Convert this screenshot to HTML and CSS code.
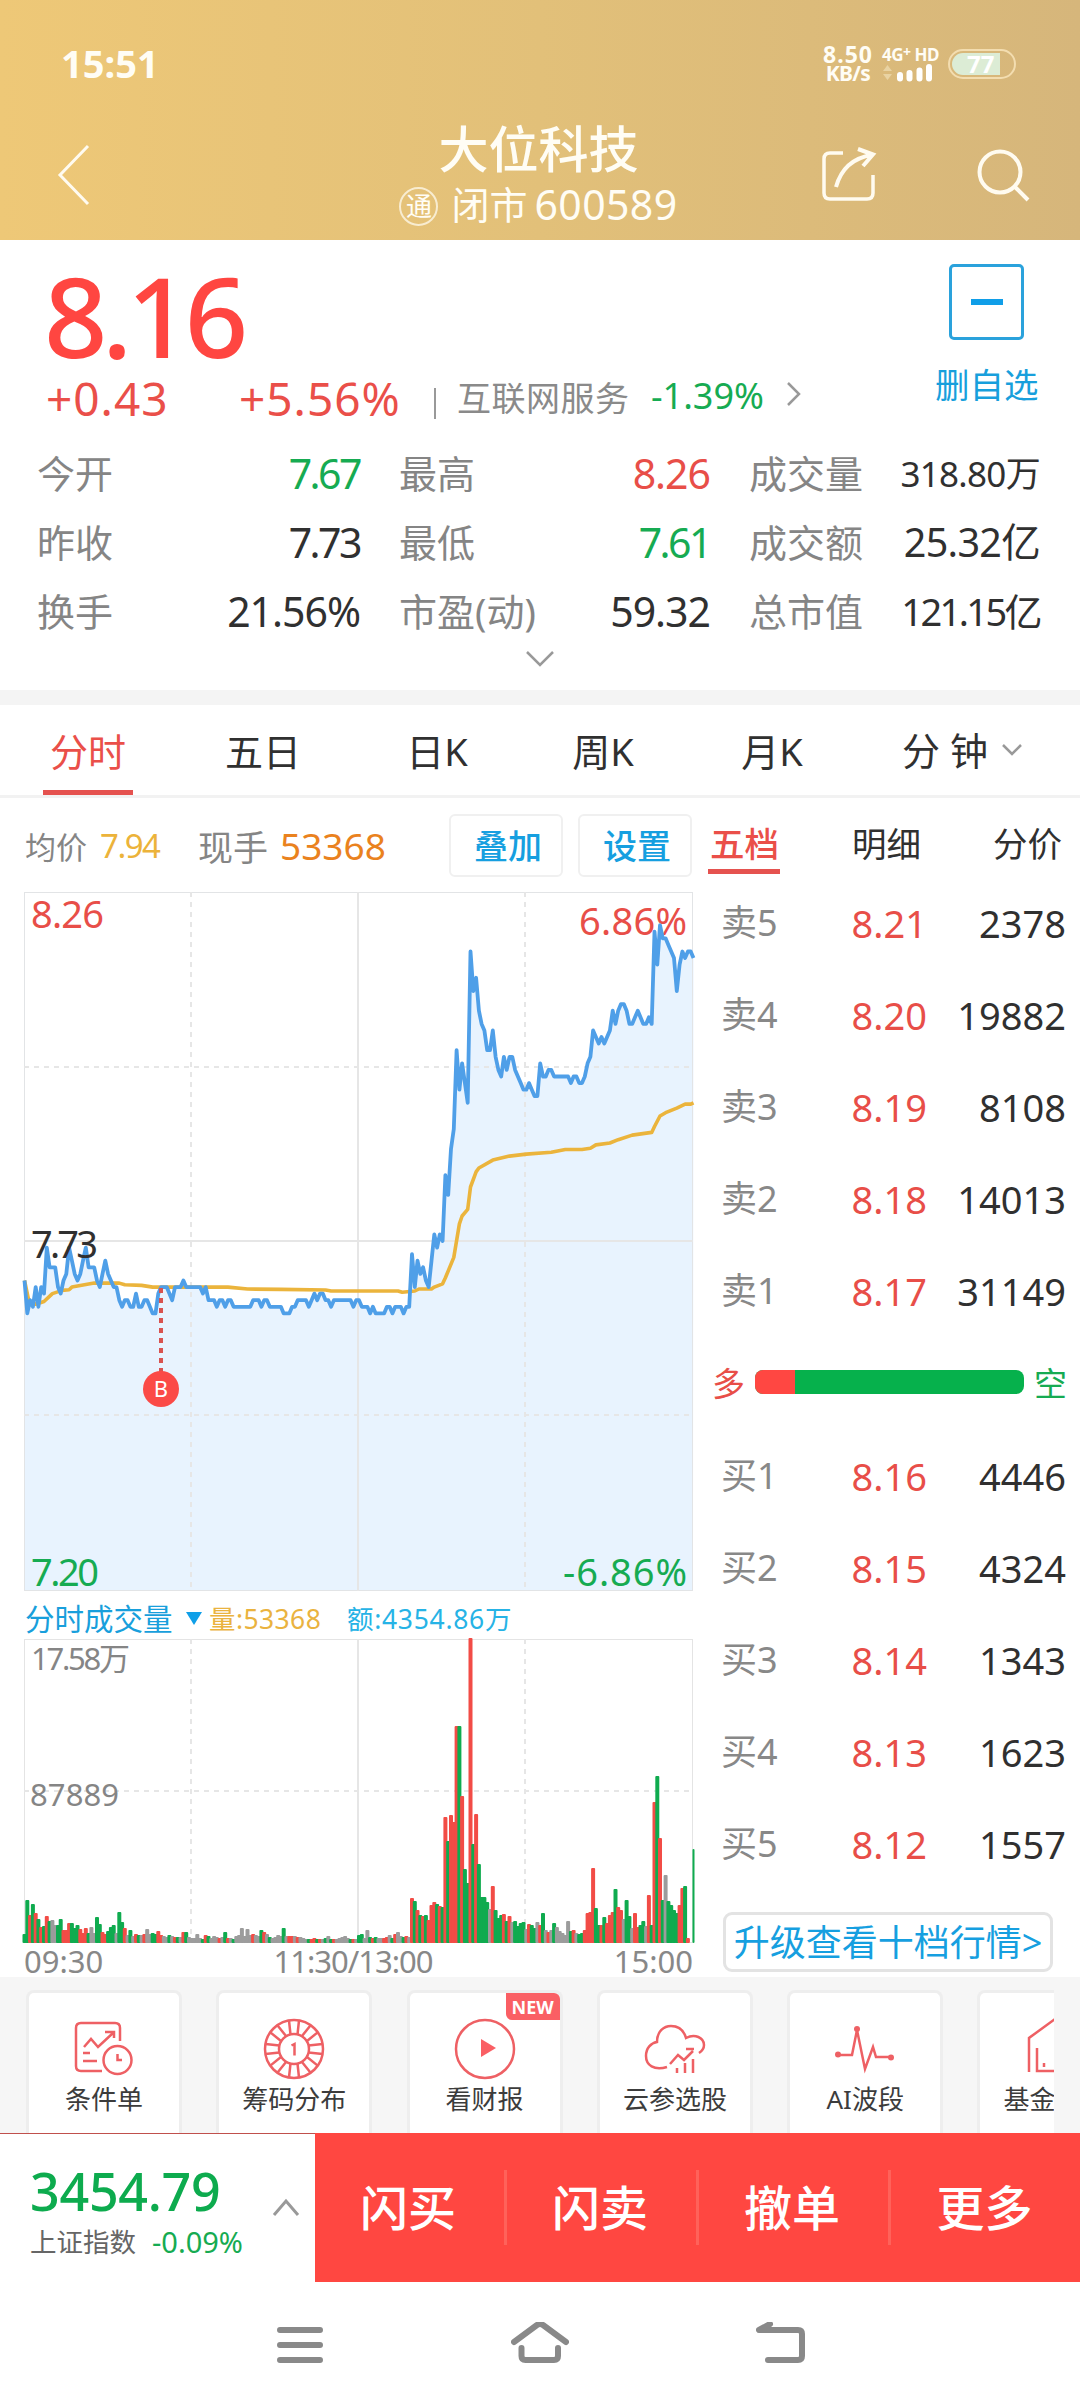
FILE: index.html
```html
<!DOCTYPE html>
<html lang="zh-CN">
<head>
    <meta charset="UTF-8">
    <meta name="viewport" content="width=device-width, initial-scale=1.0">
    <title>大位科技 600589</title>
    <link rel="stylesheet" href="styles.css">
</head>
<body>
    <header class="header">
        <div class="status-bar">
            <span class="clock">15:51</span>
            <div class="status-right">
                <div class="speed"><span>8.50</span><span class="unit">KB/s</span></div>
                <div class="network">
                    <div class="net-type">4G<sup>+</sup> HD</div>
                    <svg width="54" height="18" viewBox="0 0 54 18">
                        <path d="M1 7L5.500 1L10 7ZM1 10L5.500 16L10 10Z" fill="#e9d3a2"/>
                        <path d="M18 11V14.500M27.500 9V14.500M37.500 6.500V14.500M47 3V14.500" stroke="#fff" stroke-width="6" stroke-linecap="round"/>
                    </svg>
                </div>
                <div class="battery"><span>77</span></div>
            </div>
        </div>
        <div class="title-bar">
            <svg class="back" width="36" height="64" viewBox="0 0 36 64"><path d="M32 3L4 32L32 61" fill="none" stroke="#fffbf0" stroke-width="3"/></svg>
            <div class="title">
                <h1>大位科技</h1>
                <div class="subtitle"><span class="badge">通</span><span>闭市</span><span class="code">600589</span></div>
            </div>
            <div class="title-actions">
                <svg width="56" height="56" viewBox="0 0 56 56" fill="none" stroke="#fffbf0" stroke-width="3.500">
                    <path d="M22 6H9Q3 6 3 12V46Q3 52 9 52H46Q52 52 52 46V28"/>
                    <path d="M15 40C20 22 31 11 51 8M37 2L52 7.500L42 19" stroke-width="4"/>
                </svg>
                <svg width="54" height="56" viewBox="0 0 54 56" fill="none" stroke="#fffbf0" stroke-width="4">
                    <circle cx="23" cy="25" r="20.500"/>
                    <path d="M38 40L51 53"/>
                </svg>
            </div>
        </div>
    </header>

    <section class="quote">
        <div class="quote-top">
            <div>
                <div class="price">8.16</div>
                <div class="change">
                    <span class="diff">+0.43</span>
                    <span class="rate">+5.56%</span>
                    <i class="bar"></i>
                    <span class="sector">互联网服务</span>
                    <span class="sector-rate">-1.39%</span>
                    <svg width="18" height="26" viewBox="0 0 18 26"><path d="M3 2L14 13L3 24" fill="none" stroke="#999" stroke-width="2.500"/></svg>
                </div>
            </div>
            <div class="fav">
                <div class="fav-box"></div>
                <span>删自选</span>
            </div>
        </div>
        <div class="stats">
            <div><label>今开</label><b class="down narrow">7.67</b></div>
            <div><label>最高</label><b class="up">8.26</b></div>
            <div><label>成交量</label><b class="small">318.80万</b></div>
            <div><label>昨收</label><b class="narrow">7.73</b></div>
            <div><label>最低</label><b class="down narrow">7.61</b></div>
            <div><label>成交额</label><b class="mid">25.32亿</b></div>
            <div><label>换手</label><b>21.56%</b></div>
            <div><label>市盈(动)</label><b>59.32</b></div>
            <div><label>总市值</label><b class="tight">121.15亿</b></div>
        </div>
        <svg class="expand" width="30" height="18" viewBox="0 0 30 18"><path d="M2 2L15 15L28 2" fill="none" stroke="#999" stroke-width="2.500"/></svg>
    </section>

    <nav class="tabs">
        <span class="active">分时</span>
        <span>五日</span>
        <span>日K</span>
        <span>周K</span>
        <span>月K</span>
        <span class="minute">分 钟<svg width="22" height="14" viewBox="0 0 22 14"><path d="M2 2L11 11L20 2" fill="none" stroke="#999" stroke-width="2.500"/></svg></span>
    </nav>

    <main class="main">
        <div class="left">
            <div class="info">
                <span class="avg-label">均价</span><span class="avg">7.94</span>
                <span class="now-label">现手</span><span class="now">53368</span>
                <button class="btn-add">叠加</button>
                <button>设置</button>
            </div>
            <svg class="price-chart" id="price-chart" width="669" height="699" viewBox="0 0 669 699"></svg>
            <div class="vol-head">
                <span class="vol-title">分时成交量</span>
                <svg width="16" height="13" viewBox="0 0 16 13"><path d="M0 0H16L8 13Z" fill="#0f9fe8"/></svg>
                <span class="vol-num">量:53368</span>
                <span class="vol-amount">额:4354.86万</span>
            </div>
            <svg class="vol-chart" id="vol-chart" width="669" height="304" viewBox="0 0 669 304"></svg>
            <div class="times"><span>09:30</span><span class="noon">11:30/13:00</span><span>15:00</span></div>
        </div>
        <div class="right">
            <div class="book-tabs"><span class="active">五档</span><span>明细</span><span>分价</span></div>
            <div class="book" id="book"></div>
            <div class="upgrade">升级查看十档行情&gt;</div>
        </div>
    </main>

    <section class="shortcuts">
        <div class="shortcut-row">
            <div class="card">
                <svg width="62" height="62" viewBox="0 0 62 62" class="icon">
                    <path d="M29 53H8Q3 53 3 48V10Q3 5 8 5H42Q47 5 47 10V23"/>
                    <path d="M11 29L18 21L25 29L40 15M32 14H41V20M10 35H17M10 43H24"/>
                    <circle cx="44.500" cy="42" r="14"/>
                    <path d="M44.500 36V42H49"/>
                </svg>
                <span>条件单</span>
            </div>
            <div class="card">
                <svg width="62" height="62" viewBox="0 0 62 62" class="icon">
                    <circle cx="31" cy="31" r="29"/>
                    <circle cx="31" cy="31" r="15"/>
                    <g id="chip-spokes"></g>
                    <path d="M28.500 27.500L31.500 26V37.500"/>
                </svg>
                <span>筹码分布</span>
            </div>
            <div class="card">
                <em class="new">NEW</em>
                <svg width="62" height="62" viewBox="0 0 62 62" class="icon">
                    <circle cx="31" cy="31" r="29"/>
                    <path d="M27 21V39L42 30Z" fill="#fa5f64" stroke="none"/>
                </svg>
                <span>看财报</span>
            </div>
            <div class="card">
                <svg width="62" height="62" viewBox="0 0 62 62" class="icon">
                    <path d="M23 49C10 53 2 47 2 38C2 30 7 25 13 24C13 13 20 8 27 8C35 8 40 13 42 20C51 15 60 20 60 27C60 31 58 33 55 35"/>
                    <path d="M26 46L34 37L40 42L49 33M42 31H50M33 50V55M41 45V55M49 41V55"/>
                </svg>
                <span>云参选股</span>
            </div>
            <div class="card">
                <svg width="62" height="62" viewBox="0 0 62 62" class="icon">
                    <path d="M4 37H18L23 12L31 51L39 29L42 39H57"/>
                    <g fill="#ee6064" stroke="none"><circle cx="4" cy="36.500" r="3"/><circle cx="23" cy="11" r="3"/><circle cx="57" cy="39.500" r="3"/></g>
                </svg>
                <span>AI波段</span>
            </div>
            <div class="card">
                <svg width="62" height="62" viewBox="0 0 62 62" class="icon">
                    <path d="M5 54V20L31 1L57 20V54M13 30V53H49V30M20 45V49"/>
                </svg>
                <span>基金重仓</span>
            </div>
        </div>
    </section>

    <footer class="trade-bar">
        <div class="index">
            <div>
                <div class="index-value">3454.79</div>
                <div class="index-sub"><span>上证指数</span><span class="index-rate">-0.09%</span></div>
            </div>
            <svg width="28" height="20" viewBox="0 0 28 20"><path d="M2 17L14 3L26 17" fill="none" stroke="#999" stroke-width="3"/></svg>
        </div>
        <div class="actions">
            <span>闪买</span><span>闪卖</span><span>撤单</span><span>更多</span>
        </div>
    </footer>

    <div class="system-nav">
        <svg width="46" height="46" viewBox="0 0 46 46" class="nav-icon"><path d="M3 8H43M3 23H43M3 38H43"/></svg>
        <svg width="58" height="46" viewBox="0 0 58 46" class="nav-icon"><path d="M3 20L26 3Q29 1 32 3L55 20M10.500 26V34Q10.500 38 14.500 38H43Q47 38 47 34V26"/></svg>
        <svg width="50" height="46" viewBox="0 0 50 46" class="nav-icon"><path d="M14 2L3 8H42Q46 8 46 12V34Q46 38 42 38H12"/></svg>
    </div>
    <script src="app.js"></script>
</body>
</html>
```
FILE: styles.css
```css
* {
    box-sizing: border-box;
}
body {
    margin: 0;
    width: 1080px;
    height: 2408px;
    overflow: hidden;
    background-color: #fff;
    color: #303030;
    font-family: "Noto Sans", "Noto Sans CJK SC", sans-serif;
    white-space: nowrap;
}
svg {
    display: block;
    flex: none;
}
b, em, i, h1 {
    font-weight: normal;
    font-style: normal;
    margin: 0;
}

/* header */
.header {
    height: 240px;
    background: linear-gradient(90deg, #eec877, #e2c079 50%, #d6b67b);
    color: #fffdf5;
}
.status-bar {
    display: flex;
    justify-content: space-between;
    align-items: center;
    height: 110px;
    padding: 18px 64px 0 61px;
}
.clock {
    font-size: 38px;
    font-weight: bold;
    line-height: 50px;
    margin-top: -3px;
}
.status-right {
    display: flex;
    align-items: center;
    gap: 9px;
    font-weight: bold;
}
.speed {
    display: flex;
    flex-direction: column;
    align-items: center;
    font-size: 23px;
    line-height: 19px;
}
.speed span:first-child {
    letter-spacing: 1px;
}
.speed .unit {
    font-size: 21px;
    letter-spacing: -0.7px;
}
.network {
    width: 57px;
}
.net-type {
    font-size: 17px;
    line-height: 18px;
    letter-spacing: -0.5px;
}
.net-type sup {
    font-size: 14px;
    line-height: 0;
    vertical-align: 4px;
}
.battery {
    width: 68px;
    height: 30px;
    padding: 2px;
    border: 2px solid #f3ddb0;
    border-radius: 15px;
}
.battery span {
    display: block;
    width: 48px;
    height: 22px;
    padding-left: 15px;
    border-radius: 11px 0 0 11px;
    background-color: #dcecd5;
    color: #fff;
    font-size: 24px;
    line-height: 22px;
}
.title-bar {
    display: grid;
    grid-template-columns: 1fr 278px 1fr;
    align-items: center;
    height: 130px;
    padding: 0 49px 0 56px;
}
.title {
    display: flex;
    flex-direction: column;
    align-items: center;
    margin-left: -10px;
}
.title h1 {
    font-size: 50px;
    font-weight: 500;
    line-height: 60px;
}
.subtitle {
    display: flex;
    align-items: center;
    margin-top: -2px;
    font-size: 38px;
    line-height: 54px;
}
.badge {
    width: 39px;
    height: 39px;
    margin: 5px 13px 0 0;
    border: 2px solid #f8ecd0;
    border-radius: 50%;
    font-size: 26px;
    line-height: 34px;
    text-align: center;
}
.code {
    margin-left: 7px;
    font-size: 41px;
    letter-spacing: 0.4px;
}
.title-actions {
    display: flex;
    justify-content: flex-end;
    gap: 100px;
}

/* quote */
.quote {
    height: 450px;
    padding-top: 21px;
}
.quote-top {
    display: flex;
    justify-content: space-between;
    padding: 0 42px 0 46px;
}
.price {
    margin: -1px 0 1px -2px;
    color: #ff4641;
    font-size: 111px;
    line-height: 110px;
    letter-spacing: -5.500px;
    font-weight: 500;
}
.change {
    display: flex;
    align-items: center;
    height: 54px;
    line-height: 54px;
}
.diff, .rate {
    color: #ea4f49;
    font-size: 46px;
    letter-spacing: 1px;
}
.diff {
    width: 193px;
}
.rate {
    width: 195px;
}
.bar {
    width: 2px;
    height: 31px;
    margin: 10px 21px 0 0;
    background-color: #999;
}
.sector {
    width: 194px;
    color: #8a8a8a;
    font-size: 34px;
    letter-spacing: 0.5px;
}
.sector-rate {
    width: 134px;
    color: #16ab52;
    font-size: 36px;
    line-height: 50px;
    margin-top: -5px;
}
.change svg {
    margin-top: -8px;
}
.fav {
    width: 103px;
    padding-top: 3px;
    color: #189fdc;
    font-size: 34.500px;
    line-height: 50px;
    text-align: center;
}
.fav-box {
    display: flex;
    align-items: center;
    justify-content: center;
    width: 75px;
    height: 76px;
    margin: 0 auto 20px;
    border: 3px solid #2aa2dc;
    border-radius: 5px;
}
.fav-box::after {
    content: "";
    width: 32px;
    height: 6px;
    background-color: #109ee8;
}
.stats {
    display: grid;
    grid-template-columns: 323px 311px 291px;
    column-gap: 39px;
    grid-auto-rows: 69px;
    margin-top: 14px;
    padding-left: 37px;
}
.stats div {
    display: flex;
    justify-content: space-between;
    line-height: 69px;
}
.stats label {
    color: #858585;
    font-size: 38px;
}
.stats b {
    font-size: 41px;
    letter-spacing: -1px;
}
.stats .narrow {
    letter-spacing: -2.500px;
}
.stats .small {
    font-size: 35px;
    letter-spacing: -0.7px;
}
.stats .mid {
    font-size: 39.500px;
    letter-spacing: -0.7px;
}
.stats .tight {
    font-size: 38px;
    letter-spacing: -2.6px;
}
.up {
    color: #e84e48;
}
.down {
    color: #16ab52;
}
.expand {
    margin: 4px auto 0;
}

/* tabs */
.tabs {
    display: flex;
    height: 108px;
    padding-left: 43px;
    border-top: 15px solid #f4f4f4;
    border-bottom: 3px solid #f2f2f2;
    font-size: 38px;
    line-height: 92px;
}
.tabs span {
    width: 164px;
    margin-right: 10px;
    text-align: center;
}
.tabs .active {
    width: 90px;
    margin-right: 48px;
    border-bottom: 5px solid #e5524f;
    color: #ea4f49;
}
.tabs span:nth-child(3) {
    margin-right: 2px;
}
.tabs span:nth-child(4) {
    margin-right: 5px;
}
.tabs .minute {
    display: flex;
    align-items: center;
    gap: 13px;
    width: auto;
    margin: 0 0 0 38px;
}

/* charts */
.main {
    display: flex;
    height: 1179px;
}
.left {
    width: 693px;
    padding-left: 24px;
}
.info {
    display: flex;
    align-items: center;
    height: 93px;
    padding-top: 2px;
    color: #858585;
}
.avg-label {
    width: 76px;
    padding-left: 1px;
    font-size: 31px;
}
.avg {
    width: 98px;
    color: #ecb33a;
    font-size: 33px;
    letter-spacing: -1.5px;
}
.now-label {
    width: 82px;
    font-size: 35px;
}
.now {
    width: 169px;
    color: #ea821e;
    font-size: 37px;
}
.info button {
    width: 114px;
    height: 63px;
    padding: 0;
    border: 2px solid #f0f0f0;
    border-radius: 6px;
    background-color: #fff;
    color: #169fe0;
    font-family: inherit;
    font-size: 34px;
    font-weight: 500;
    line-height: 56px;
    text-indent: 4px;
}
.info .btn-add {
    margin-right: 15px;
}
.price-chart {
    overflow: visible;
    margin-top: 1px;
}
.vol-head {
    display: flex;
    align-items: center;
    height: 48px;
    padding: 7px 0 0 1px;
    line-height: 40px;
}
.vol-head svg {
    margin: 0 7px 0 13px;
}
.vol-title {
    width: 148px;
    color: #189fdc;
    font-size: 29.500px;
}
.vol-num {
    width: 138px;
    color: #eab33f;
    font-size: 26.500px;
    letter-spacing: 0.4px;
}
.vol-amount {
    color: #26b3e6;
    font-size: 26.500px;
    letter-spacing: 0.7px;
}
.vol-chart {
    overflow: visible;
}
.times {
    display: flex;
    justify-content: space-between;
    color: #888;
    font-size: 31px;
    line-height: 36px;
}
.times .noon {
    letter-spacing: -1px;
    margin-right: 11px;
}

/* order book */
.right {
    width: 387px;
}
.book-tabs {
    display: flex;
    justify-content: space-between;
    height: 79px;
    padding: 18px 18px 0 15px;
    font-size: 34.500px;
    line-height: 56px;
}
.book-tabs span {
    height: 58px;
}
.book-tabs .active {
    padding: 0 1px 0 2px;
    border-bottom: 5px solid #e5524f;
    color: #ea4f49;
    font-weight: 500;
}
.book-row {
    display: grid;
    grid-template-columns: 99px 107px 139px;
    height: 92.100px;
    padding-left: 28px;
    font-size: 38px;
    line-height: 92px;
}
.book-row .name {
    color: #888;
    font-size: 36px;
}
.book-row .cost {
    color: #e84e48;
    text-align: right;
}
.book-row .amount {
    text-align: right;
}
.ratio {
    display: flex;
    align-items: center;
    gap: 10px;
    height: 92.100px;
    padding: 0 0 3px 19px;
    font-size: 33px;
}
.ratio-bar {
    width: 269px;
    height: 24px;
    border-radius: 8px;
    overflow: hidden;
    background-color: #06b14c;
}
.ratio-bar i {
    display: block;
    height: 24px;
    background-color: #ff4742;
}
.upgrade {
    width: 330px;
    height: 60px;
    margin: 22px 0 0 30px;
    border: 3px solid #e3e3e3;
    border-radius: 9px;
    color: #169fe0;
    font-size: 36px;
    line-height: 56px;
    text-align: center;
}

/* shortcuts */
.shortcuts {
    height: 156px;
    padding: 13px 26px 0;
    background-color: #f6f6f6;
}
.shortcut-row {
    display: flex;
    gap: 34.300px;
    overflow: hidden;
}
.card {
    position: relative;
    display: flex;
    flex: none;
    flex-direction: column;
    align-items: center;
    width: 156px;
    height: 143px;
    padding-top: 25px;
    border: 3px solid #eee;
    border-bottom: 0;
    border-radius: 8px 8px 0 0;
    background-color: #fff;
    color: #3c3c3c;
    font-size: 26px;
    line-height: 38px;
}
.icon {
    fill: none;
    stroke: #ee6064;
    stroke-width: 2.500px;
}
.new {
    position: absolute;
    top: 0;
    right: 0;
    width: 54px;
    height: 27px;
    border-radius: 0 6px 0 6px;
    background-color: #fa5f64;
    color: #fff;
    font-size: 18px;
    font-weight: bold;
    line-height: 28px;
    text-align: center;
}

/* bottom bar */
.trade-bar {
    display: flex;
    height: 149px;
}
.index {
    display: flex;
    justify-content: space-between;
    width: 315px;
    padding: 24px 15px 0 30px;
    border-top: 1px solid #c0504c;
}
.index svg {
    margin-top: 40px;
}
.index-value {
    color: #0dab4e;
    font-size: 52px;
    font-weight: 500;
    letter-spacing: -0.3px;
    line-height: 66px;
}
.index-sub {
    display: flex;
    gap: 16px;
    color: #666;
    font-size: 26.500px;
    line-height: 36px;
}
.index-rate {
    color: #16ab52;
    font-size: 29px;
}
.actions {
    display: grid;
    grid-template-columns: repeat(4, 192px);
    align-items: center;
    width: 765px;
    background-color: #ff4741;
    color: #fff;
    font-size: 48px;
    font-weight: 500;
}
.actions span {
    height: 75px;
    padding-right: 3px;
    border-right: 3px solid #ff625a;
    line-height: 75px;
    text-align: center;
}
.actions span:last-child {
    border: 0;
    padding-right: 40px;
    padding-left: 35px;
}
.system-nav {
    display: flex;
    justify-content: center;
    gap: 187.500px;
    padding: 40px 0 0 3px;
}
.nav-icon {
    fill: none;
    stroke: #898989;
    stroke-width: 6px;
    stroke-linecap: round;
    stroke-linejoin: round;
}
```
FILE: app.js
```js
// price of every minute, in cents from the last close (7.73)
let prices = [
    -6,-11,-9,-10,-7,-10,-7,-8,-1,-4,-4,-4,-7,-8,-6,-5,-1,-3,-5,-6,
    -5,-3,-1,-4,-4,-4,-6,-7,-5,-3,-5,-6,-7,-7,-9,-10,-9,-9,-10,-10,
    -8,-10,-10,-9,-9,-10,-11,-11,-8,-7,-7,-7,-8,-9,-7,-7,-7,-6,-7,-7,
    -7,-7,-7,-7,-8,-7,-9,-9,-9,-10,-9,-9,-10,-9,-9,-10,-10,-10,-10,-10,
    -10,-10,-9,-9,-9,-10,-9,-9,-10,-10,-10,-10,-10,-11,-11,-11,-10,-10,-9,-9,
    -9,-9,-10,-9,-8,-9,-8,-8,-9,-9,-10,-9,-9,-9,-9,-9,-9,-9,-10,-9,
    -9,-10,-10,-10,-11,-10,-11,-11,-11,-11,-10,-10,-11,-10,-10,-10,-11,-10,-10,-2,
    -7,-3,-5,-4,-6,-7,-3,1,-1,1,0,10,7,14,17,29,23,27,24,21,
    44,38,40,35,33,32,29,29,32,28,26,25,28,26,28,28,26,25,24,23,
    23,24,23,22,22,27,25,25,26,26,25,25,25,25,25,25,24,25,25,24,
    24,25,27,28,32,31,30,31,30,31,32,35,33,35,36,36,35,33,33,34,
    35,34,33,33,34,33,47,42,48,46,46,45,44,43,38,42,44,43,44,44,43
]

// average price: [minute, cents]
let average = [
    [0,-6],[1.5,-9],[4,-9.6],[7,-9.2],[10,-8],[13.5,-7.5],[16,-7.4],[17,-7],[25,-6.4],[34,-6.4],
    [36,-6.65],[42,-6.75],[46,-7],[73,-7],[80,-7.3],[92,-7.35],[108,-7.45],[110,-7.6],[134,-7.6],[135.5,-7.8],
    [140,-7.6],[141.5,-7.3],[146,-7.3],[147,-7],[150,-6.5],[151,-5.6],[154,-2.5],[156,2.6],[157,3.8],[159,4.8],
    [160,8.2],[162,10.5],[163,11.1],[168,12.3],[174,12.9],[180,13.2],[189,13.5],[194,13.9],[200,13.9],[203,14.1],
    [205,14.6],[210,14.9],[213,15.4],[218,16.1],[225,16.5],[226,17.4],[228,19],[230,19.5],[234,20.2],[237,20.8],[239,20.8],[240,21]
]

// volume of every minute: g down, r up, x flat
let volumes = `g9 g43 r28 g39 r30 g24 r16 g17 r27 g22 x23 x18 g18 g24 r13 r13 r20 g20 g15 g18
r14 r10 r15 g10 x16 x10 g26 g19 r11 r9 g12 g16 g18 x10 g31 g21 r15 x8 g13 x7
r9 g8 x8 r9 x14 x9 g10 g9 r12 r8 x7 x6 g8 x7 r6 g6 x6 r11 g11 x6
x5 x5 x9 x5 g4 r8 g7 x5 x7 x6 r5 x6 g11 r5 x5 g4 x7 x8 x15 x7
x14 x8 r9 x8 x7 g13 r11 x9 g6 x5 x6 x8 x7 g15 x7 r7 r7 x7 r6 x6
x5 x4 g4 r4 r5 g4 r4 x4 g5 x7 g4 r4 x4 x5 x6 x7 x5 g4 r4 x4
g8 g9 x5 x13 g6 r5 g6 x5 x5 r5 r6 x8 g5 r9 x11 x7 g6 r7 x6 r45
g42 r33 g28 r27 g28 r23 r38 r41 g39 r37 g36 r126 g102 r128 r121 r217 g217 r147 g74 g60
r305 g99 r129 g79 g46 g46 g41 x34 r57 g33 g25 g28 r29 g22 r27 x21 g22 g17 g20 g21
x14 r19 g18 g15 x21 r18 g30 x13 r11 x13 g20 x16 x12 x10 x8 x22 g12 r13 x10 g9
g10 r13 r30 r31 r75 g35 g18 r18 g26 r20 r28 r31 g54 r36 r33 x24 g43 g27 x15 r30
r16 g18 g22 x17 r48 g18 r141 g167 r105 g43 x68 g42 g38 g33 g30 r38 r55 g57 r5 x0 g94`.split(/\s+/)

let colors = { r: '#f24c46', g: '#0fab4f', x: '#9c9c9c' }

function line(x1, y1, x2, y2, attrs) {
    return `<line x1="${x1}" y1="${y1}" x2="${x2}" y2="${y2}" stroke="#e6e6e6" stroke-width="2" ${attrs || ''}/>`
}
function text(x, y, size, width, color, str) {
    return `<text x="${x}" y="${y}" font-size="${size}" textLength="${width}" fill="${color}">${str}</text>`
}
function minuteX(m) {
    return (m * 669 / 240 + 0.5).toFixed(1)
}
function priceY(p) {
    return (349 - p * 6.58).toFixed(1)
}

function drawPrices() {
    let pts = prices.map((p, m) => minuteX(m) + ',' + priceY(p)).join(' ')
    let avg = average.map(a => minuteX(a[0]) + ',' + priceY(a[1])).join(' ')
    let dash = 'stroke-dasharray="5 5"'
    let out = `<polygon points="0,699 ${pts} 669,699" fill="#e8f3fe"/>`
    out += '<rect x="0.5" y="0.5" width="668" height="698" fill="none" stroke="#e2e4e6"/>'
    out += line(167, 0, 167, 699, dash) + line(334, 0, 334, 699) + line(501, 0, 501, 699, dash)
    out += line(0, 175, 669, 175, dash) + line(0, 349, 669, 349) + line(0, 523, 669, 523, dash)
    out += text(7, 36, 38, 73, '#e84e48', '8.26')
    out += text(555, 43, 38, 108, '#e84e48', '6.86%')
    out += `<polyline points="${avg}" fill="none" stroke="#ebb43c" stroke-width="3.6" stroke-linejoin="round"/>`
    out += `<polyline points="${pts}" fill="none" stroke="#4f9fe8" stroke-width="3.8" stroke-linejoin="round"/>`
    out += text(7, 366, 38, 67, '#303030', '7.73')
    out += text(7, 694, 38, 68, '#16ab52', '7.20')
    out += text(539, 694, 38, 124, '#16ab52', '-6.86%')
    // buy mark
    out += '<line x1="137" y1="396" x2="137" y2="480" stroke="#d9534f" stroke-width="4" stroke-dasharray="5 5"/>'
    out += '<circle cx="137" cy="497" r="18" fill="#fb4a47"/>'
    out += '<text x="137" y="505" font-size="22" text-anchor="middle" fill="#fff">B</text>'
    document.getElementById('price-chart').innerHTML = out
}

function drawVolumes() {
    let dash = 'stroke-dasharray="5 5"'
    let out = '<rect x="0.5" y="0.5" width="668" height="303" fill="none" stroke="#e4e4e4"/>'
    out += line(167, 0, 167, 304, dash) + line(334, 0, 334, 304) + line(501, 0, 501, 304, dash)
    out += line(0, 152, 669, 152, dash)
    volumes.forEach((v, m) => {
        let h = Number(v.slice(1))
        if (h == 0) {
            return
        }
        let w = m == 240 ? 2 : 4
        out += `<rect x="${minuteX(m) - w / 2}" y="${304 - h}" width="${w}" height="${h}" rx="1" fill="${colors[v[0]]}"/>`
    })
    out += text(7, 31, 31, 99, '#858585', '17.58万')
    out += text(6, 167, 31, 89, '#858585', '87889')
    document.getElementById('vol-chart').innerHTML = out
}

function drawBook() {
    let rows = [
        ['卖5', '8.21', 2378], ['卖4', '8.20', 19882], ['卖3', '8.19', 8108], ['卖2', '8.18', 14013], ['卖1', '8.17', 31149],
        null,
        ['买1', '8.16', 4446], ['买2', '8.15', 4324], ['买3', '8.14', 1343], ['买4', '8.13', 1623], ['买5', '8.12', 1557]
    ]
    document.getElementById('book').innerHTML = rows.map(r => {
        if (!r) {
            return '<div class="ratio"><span class="up">多</span><div class="ratio-bar"><i style="width: 15%"></i></div><span class="down">空</span></div>'
        }
        return `<div class="book-row"><span class="name">${r[0]}</span><span class="cost">${r[1]}</span><span class="amount">${r[2]}</span></div>`
    }).join('')
}

function drawChip() {
    let out = ''
    for (let a = 0; a < 360; a += 45) {
        out += `<path d="M27.5 16.5L26 2.500M34.5 16.5L36 2.500" transform="rotate(${a} 31 31)"/>`
    }
    document.getElementById('chip-spokes').innerHTML = out
}

drawPrices()
drawVolumes()
drawBook()
drawChip()
```
